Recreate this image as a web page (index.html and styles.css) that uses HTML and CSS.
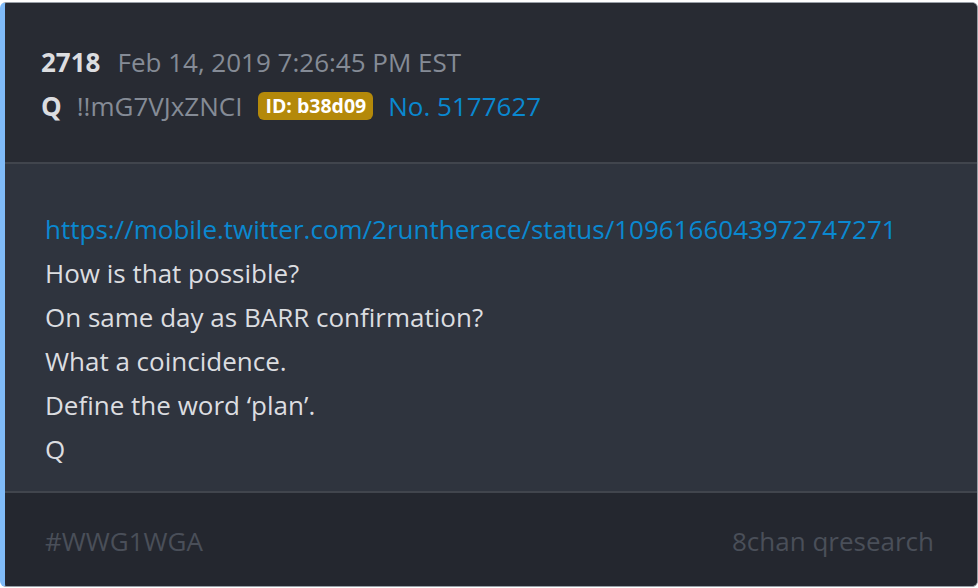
FILE: index.html
```html
<!DOCTYPE html>
<html>
<head>
<meta charset="utf-8">
<link rel="stylesheet" href="styles.css">
</head>
<body>
<div class="card">
  <div class="head">
    <div class="row">
      <span class="num">2718</span>
      <span class="muted">Feb 14, 2019 7:26:45 PM EST</span>
    </div>
    <div class="row">
      <span class="num q">Q</span>
      <span class="muted">!!mG7VJxZNCI</span>
      <span class="badge">ID: b38d09</span>
      <span class="link">No. 5177627</span>
    </div>
  </div>
  <div class="body">
    <div class="line link">https://mobile.twitter.com/2runtherace/status/1096166043972747271</div>
    <div class="line">How is that possible?</div>
    <div class="line">On same day as BARR confirmation?</div>
    <div class="line">What a coincidence.</div>
    <div class="line">Define the word ‘plan’.</div>
    <div class="line">Q</div>
  </div>
  <div class="foot">
    <span>#WWG1WGA</span>
    <span>8chan qresearch</span>
  </div>
</div>
</body>
</html>
```
FILE: styles.css
```css
html, body {
  margin: 0;
  padding: 0;
  background: #ffffff;
}
body {
  width: 978px;
  height: 588px;
  font-family: "Open Sans", "Noto Sans", sans-serif;
}
.card {
  box-sizing: border-box;
  margin-top: 2px;
  width: 978px;
  height: 585px;
  border: 1px solid #9aa0a8;
  border-left: 5px solid #80bbf8;
  border-radius: 6px;
  overflow: hidden;
  display: flex;
  flex-direction: column;
  background: #2f343e;
}
.head {
  background: #282b33;
  height: 161px;
  flex: none;
  box-sizing: border-box;
  padding: 37px 36px 0;
  border-bottom: 2px solid #41454d;
  display: flex;
  flex-direction: column;
}
.row {
  display: flex;
  align-items: center;
  height: 44px;
  font-size: 26px;
}
.num {
  color: #dcdde0;
  font-weight: 700;
  margin-right: 17px;
}
.num.q {
  margin-right: 15px;
}
.muted {
  color: #858b96;
  margin-right: 16px;
}
.badge {
  background: #b4890a;
  color: #ffffff;
  font-weight: 700;
  font-size: 19.5px;
  border-radius: 6px;
  padding: 0 7px;
  height: 28px;
  line-height: 28px;
  margin-right: 15px;
}
.link {
  color: #0a88d0;
}
.body {
  height: 327px;
  flex: none;
  padding: 43px 40px 0;
  box-sizing: border-box;
}
.line {
  font-size: 26px;
  height: 44px;
  line-height: 44px;
  color: #dcdde0;
  white-space: nowrap;
}
.body .link {
  color: #0a88d0;
}
.foot {
  flex: 1;
  background: #24272f;
  box-sizing: border-box;
  border-top: 2px solid #41454d;
  padding: 2px 43px 0 40px;
  display: flex;
  justify-content: space-between;
  align-items: center;
  font-size: 26px;
  color: #4a4f59;
}
```
